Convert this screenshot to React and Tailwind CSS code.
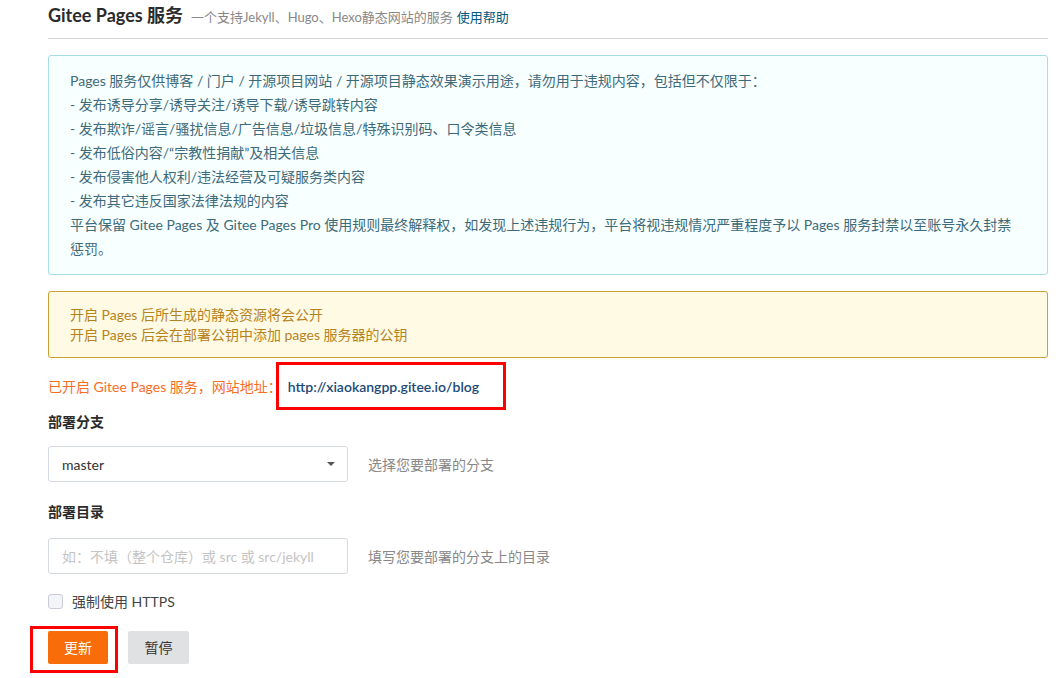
import React from 'react';

const font = { fontFamily: '"Lato", "Noto Sans CJK SC", sans-serif' };

const rules = [
  '- 发布诱导分享/诱导关注/诱导下载/诱导跳转内容',
  '- 发布欺诈/谣言/骚扰信息/广告信息/垃圾信息/特殊识别码、口令类信息',
  '- 发布低俗内容/“宗教性捐献”及相关信息',
  '- 发布侵害他人权利/违法经营及可疑服务类内容',
  '- 发布其它违反国家法律法规的内容',
];

const App = () => (
  <div className="min-h-screen bg-white text-[14px] text-[#333]" style={font}>
    <div className="pl-[48px] pr-[13px]">
      {/* header */}
      <div className="flex items-baseline pt-[2px] pb-[9px] border-b border-[#d4d4d5]">
        <span className="text-[18px] font-bold text-[#2b2b2b]">Gitee Pages 服务</span>
        <span className="ml-[8px] text-[13px] text-[#888]">一个支持Jekyll、Hugo、Hexo静态网站的服务</span>
        <span className="ml-[4px] text-[13px] text-[#005980]">使用帮助</span>
      </div>

      {/* notice */}
      <div className="mt-[16px] rounded-[3px] border border-[#a9dde4] bg-[#f8ffff] pl-[21px] pr-[30px] pt-[13px] pb-[13px] text-[14px] leading-[24px] text-[#3d6a7a]">
        <div>Pages 服务仅供博客 / 门户 / 开源项目网站 / 开源项目静态效果演示用途，请勿用于违规内容，包括但不仅限于：</div>
        {rules.map((r) => (
          <div key={r}>{r}</div>
        ))}
        <div>
          平台保留 Gitee Pages 及 Gitee Pages Pro 使用规则最终解释权，如发现上述违规行为，平台将视违规情况严重程度予以 Pages 服务封禁以至账号永久封禁惩罚。
        </div>
      </div>

      {/* warning */}
      <div className="mt-[16px] rounded-[3px] border border-[#c9a233] bg-[#fffae3] pl-[21px] pt-[13px] pb-[12px] text-[14px] leading-[20px] text-[#b6821d]">
        <div>开启 Pages 后所生成的静态资源将会公开</div>
        <div>开启 Pages 后会在部署公钥中添加 pages 服务器的公钥</div>
      </div>

      {/* site url */}
      <div className="mt-[4px] flex items-center text-[14px]">
        <span className="text-[#f86e1f]">已开启 Gitee Pages 服务，网站地址：</span>
        <span className="ml-[-6px] flex h-[48px] w-[230px] items-center border-[3px] border-[#f00] pl-[9px] font-semibold text-[#1b4a78]">
          http://xiaokangpp.gitee.io/blog
        </span>
      </div>

      {/* branch */}
      <div className="mt-[1px] text-[14px] font-bold text-[#2b2b2b]">部署分支</div>
      <div className="mt-[14px] flex items-center">
        <div className="flex h-[36px] w-[300px] items-center justify-between rounded-[3px] border border-[#d4d9e2] pl-[13px] pr-[12px] text-[14px] text-[#333]">
          <span>master</span>
          <span className="h-0 w-0 border-x-[4px] border-t-[4px] border-x-transparent border-t-[#555]" />
        </div>
        <span className="ml-[20px] text-[14px] text-[#888]">选择您要部署的分支</span>
      </div>

      {/* dir */}
      <div className="mt-[19px] text-[14px] font-bold text-[#2b2b2b]">部署目录</div>
      <div className="mt-[16px] flex items-center">
        <div className="flex h-[36px] w-[300px] items-center rounded-[3px] border border-[#d4d9e2] pl-[13px] text-[14px] text-[#c4c4c4]">
          如：不填（整个仓库）或 src 或 src/jekyll
        </div>
        <span className="ml-[20px] text-[14px] text-[#888]">填写您要部署的分支上的目录</span>
      </div>

      {/* https */}
      <div className="mt-[17px] flex items-center">
        <span className="h-[15px] w-[15px] rounded-[3px] border border-[#c8ccd4] bg-[#f3f4f8]" />
        <span className="ml-[9px] text-[14px] text-[#444]">强制使用 HTTPS</span>
      </div>

      {/* buttons */}
      <div className="mt-[14px] flex items-start">
        <div className="ml-[-18px] h-[47px] w-[88px] border-[3px] border-[#f00] pl-[15px] pt-[2px]">
          <button className="h-[33px] w-[60px] rounded-[2px] bg-[#f86c0a] text-[14px] text-white">更新</button>
        </div>
        <button className="ml-[10px] mt-[5px] h-[33px] w-[61px] rounded-[2px] bg-[#e0e1e2] text-[14px] text-[#333]">暂停</button>
      </div>
    </div>
  </div>
);

export default App;
